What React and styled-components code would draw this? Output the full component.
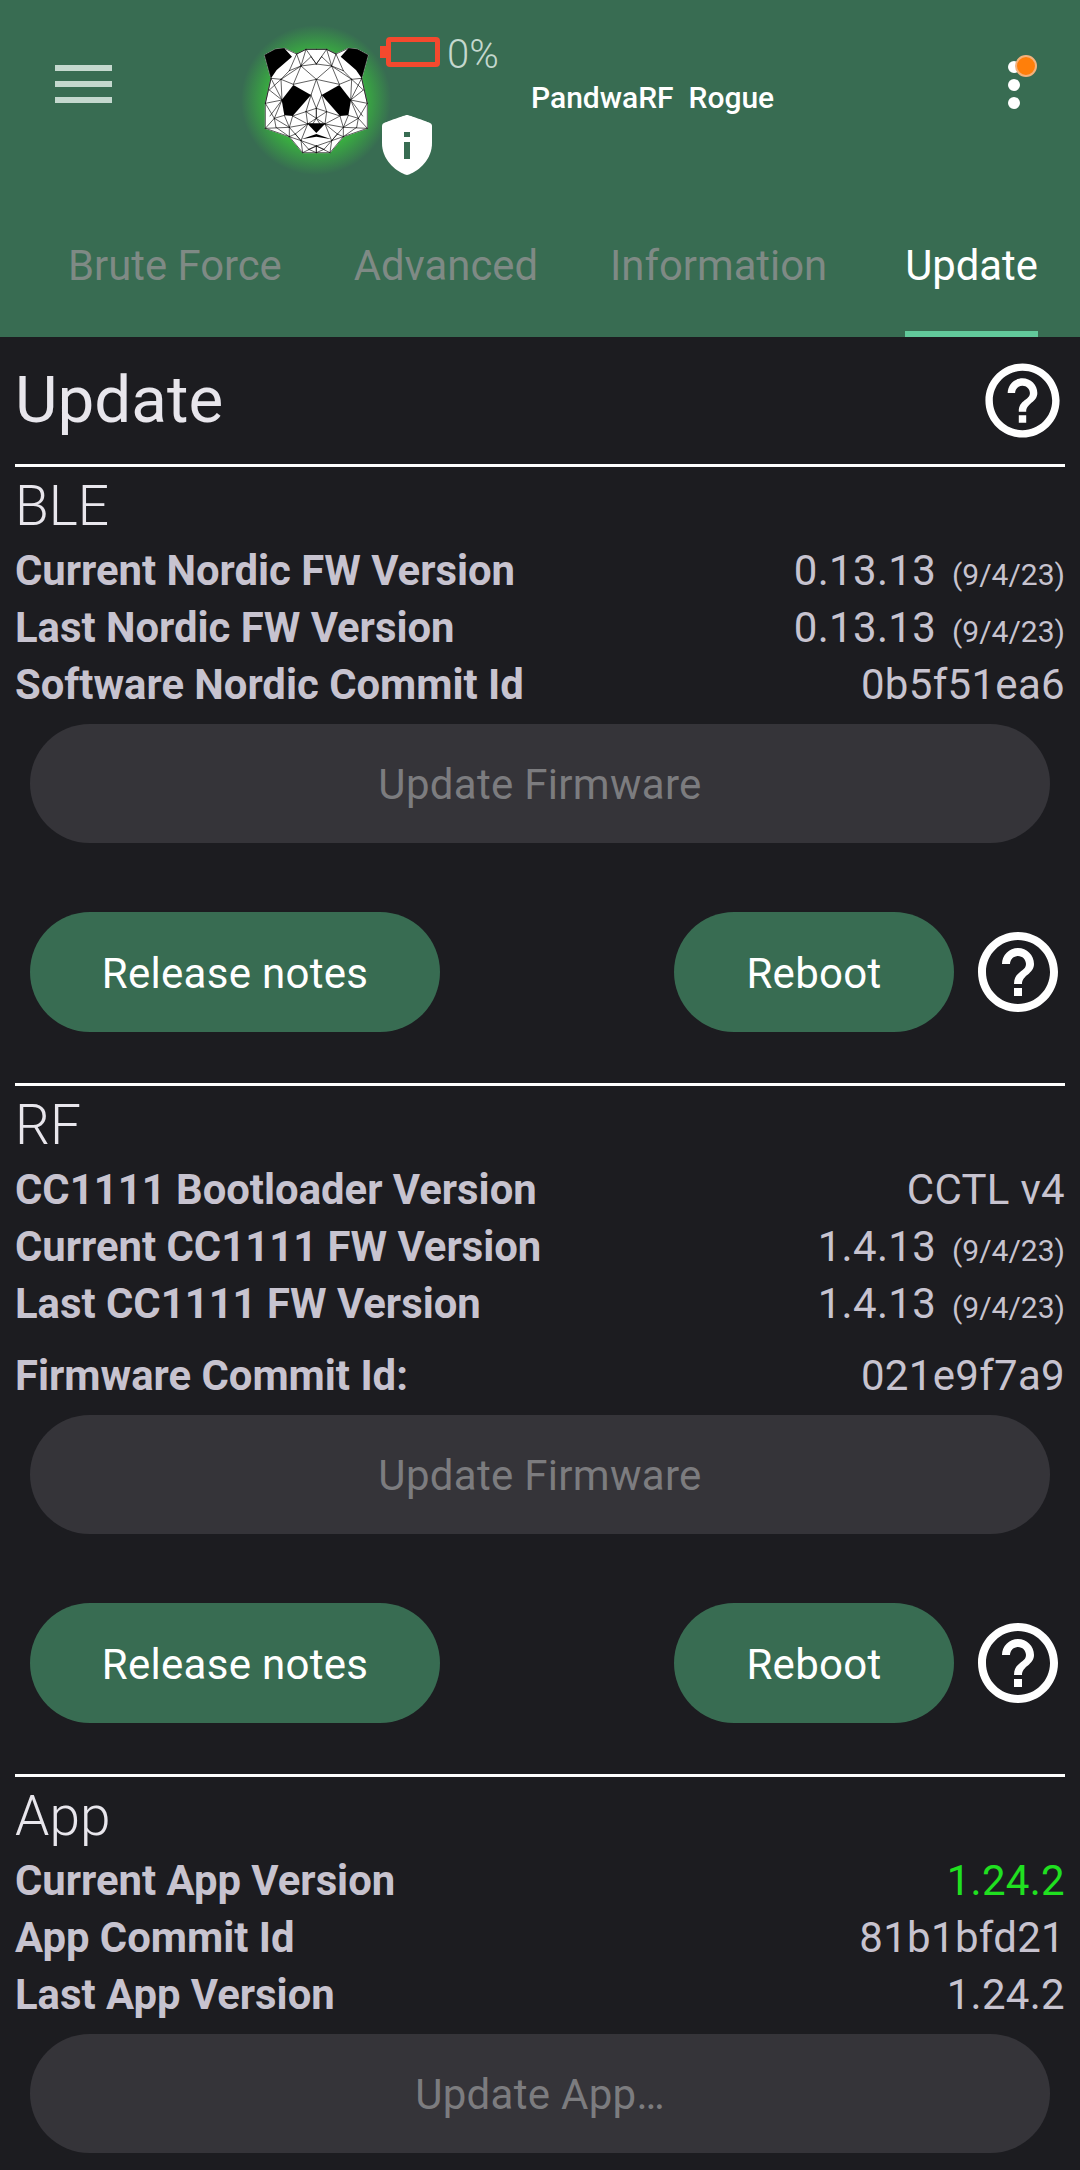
import React from "react";
import styled, { createGlobalStyle } from "styled-components";
import { MdHelpOutline } from "react-icons/md";

const Global = createGlobalStyle`
  html, body {
    margin: 0;
    padding: 0;
    background: #1c1c20;
  }
  * {
    box-sizing: border-box;
  }
`;

const Page = styled.div`
  width: 1080px;
  height: 2170px;
  overflow: hidden;
  background: #1c1c20;
  font-family: Roboto, "Liberation Sans", sans-serif;
`;

// * Header
const Header = styled.header`
  height: 337px;
  background: #386c52;
`;

const TopBar = styled.div`
  display: flex;
  align-items: flex-start;
  height: 175px;
`;

const MenuIcon = styled.div`
  display: flex;
  flex-direction: column;
  gap: 10px;
  width: 57px;
  margin: 65px 0 0 55px;
`;

const MenuBar = styled.span`
  display: block;
  height: 6px;
  background: #c4d8ce;
`;

const Logo = styled.div`
  display: flex;
  align-items: center;
  justify-content: center;
  width: 150px;
  height: 150px;
  margin: 25px 0 0 129px;
  border-radius: 50%;
  background: radial-gradient(closest-side, #3acb3a 0%, #3ac63a 50%, rgba(56, 108, 82, 0) 100%);
`;

const StatusColumn = styled.div`
  display: flex;
  flex-direction: column;
  align-items: flex-start;
  width: 151px;
  margin: 33px 0 0 -11px;
`;

const BatteryRow = styled.div`
  display: flex;
  align-items: center;
  gap: 7px;
  height: 38px;
  color: #c4d8ce;
  font-size: 40px;
  font-weight: 300;
`;

const Percent = styled.span`
  margin-top: 5px;
`;

const ShieldIcon = styled.svg`
  width: 50px;
  height: 60px;
  margin: 44px 0 0 2px;
`;

const DeviceName = styled.div`
  margin-top: 79px;
  color: #fff;
  font-size: 30px;
  font-weight: 500;
  line-height: 38px;
  white-space: pre;
`;

const MoreIcon = styled.div`
  position: relative;
  display: flex;
  flex-direction: column;
  gap: 6px;
  margin: 61px 60px 0 auto;
`;

const MoreDot = styled.span`
  display: block;
  width: 12px;
  height: 12px;
  border-radius: 50%;
  background: #fff;
`;

const Badge = styled.span`
  position: absolute;
  top: -6px;
  left: 7px;
  width: 22px;
  height: 22px;
  border: 2px solid #f4b27c;
  border-radius: 50%;
  background: #ff7f0a;
`;

const Tabs = styled.nav`
  display: flex;
  gap: 72px;
  height: 162px;
  padding-left: 68px;
`;

const Tab = styled.div`
  height: 162px;
  margin-left: ${p => (p.$active ? 6 : 0)}px;
  padding-top: 69px;
  border-bottom: 6px solid ${p => (p.$active ? "#62c99b" : "transparent")};
  color: ${p => (p.$active ? "#fff" : "#7f8a85")};
  font-size: 41.8px;
  line-height: 44px;
`;

// * Content
const Content = styled.main`
  padding: 0 15px;
`;

const TitleRow = styled.div`
  display: flex;
  align-items: center;
  justify-content: space-between;
  height: 127px;
`;

const Title = styled.h1`
  margin: 0 0 3px;
  color: #e8e6ec;
  font-size: 65.6px;
  font-weight: 400;
`;

const HelpIcon = styled(MdHelpOutline)`
  display: block;
  flex: none;
  margin: ${p => p.$margin};
  color: #fff;
`;

const Divider = styled.hr`
  height: 3px;
  margin: 0;
  border: 0;
  background: #fff;
`;

const SectionTitle = styled.h2`
  display: flex;
  align-items: center;
  height: 75px;
  margin: 0;
  padding-top: 2px;
  color: #e8e6ec;
  font-size: 55px;
  font-weight: 300;
`;

const Row = styled.div`
  display: flex;
  align-items: center;
  justify-content: space-between;
  height: 57px;
  margin-top: ${p => p.$gap || 0}px;
  color: #c7c3cf;
`;

const Label = styled.span`
  font-size: 41.8px;
  font-weight: 700;
`;

const Value = styled.span`
  color: ${p => (p.$ok ? "#20e020" : "#c7c3cf")};
  font-size: 42px;
  font-weight: 400;
  letter-spacing: 0.3px;
`;

const DateText = styled.small`
  margin-left: 16px;
  font-size: 30px;
  font-weight: 400;
  letter-spacing: 0;
`;

const WideButton = styled.div`
  display: flex;
  align-items: center;
  justify-content: center;
  height: 119px;
  margin: 11px 15px 0;
  padding-top: 2px;
  border-radius: 60px;
  background: #353439;
  color: #7c7c7f;
  font-size: 42px;
  letter-spacing: 0.3px;
`;

const ActionRow = styled.div`
  display: flex;
  align-items: center;
  height: 120px;
  margin: 69px 0 51px 15px;
`;

const PillButton = styled.div`
  display: flex;
  align-items: center;
  justify-content: center;
  width: ${p => p.$width}px;
  height: 120px;
  margin-right: ${p => p.$push || 0}px;
  padding-top: 2px;
  border-radius: 60px;
  background: #386c52;
  color: #fff;
  font-size: 42px;
  letter-spacing: 0.3px;
`;

// * Panda logo: left half of the mesh, mirrored around x=181
const meshLines = [
  [122, 42, 150, 28], [150, 28, 181, 28], [150, 28, 135, 78], [150, 28, 181, 72], [122, 42, 135, 78],
  [122, 42, 100, 92], [135, 78, 181, 72], [135, 78, 181, 118], [135, 78, 75, 118], [135, 78, 112, 133],
  [112, 133, 181, 118], [75, 118, 112, 133], [75, 118, 45, 115], [45, 115, 78, 180], [75, 118, 78, 180],
  [28, 190, 78, 180], [28, 190, 55, 235], [78, 180, 55, 235], [85, 226, 55, 235], [28, 265, 55, 235],
  [28, 265, 100, 262], [55, 235, 100, 262], [85, 226, 100, 262], [110, 228, 100, 262], [110, 228, 155, 252],
  [100, 262, 155, 252], [100, 262, 100, 290], [100, 290, 135, 302], [100, 262, 135, 302], [155, 252, 135, 302],
  [135, 302, 140, 338], [135, 302, 181, 318], [140, 338, 181, 318], [181, 318, 181, 338], [165, 165, 181, 118],
  [165, 165, 150, 215], [110, 228, 150, 215], [150, 215, 155, 252], [150, 215, 181, 205], [165, 165, 181, 205],
  [181, 205, 181, 235], [181, 235, 155, 252], [150, 215, 181, 235], [28, 190, 45, 115],
  [100, 92, 75, 118], [100, 92, 135, 78], [165, 50, 135, 78], [165, 50, 181, 72], [40, 150, 75, 118],
  [40, 150, 78, 180], [42, 228, 78, 180], [60, 262, 55, 235], [60, 262, 100, 290], [118, 282, 155, 252],
  [118, 282, 100, 290], [118, 282, 135, 302], [158, 328, 135, 302], [158, 328, 181, 318], [158, 328, 181, 338],
  [181, 235, 170, 252]
];

const outline =
  "45,115 26,45 58,28 85,25 122,42 150,28 212,28 240,42 277,25 304,28 336,45 317,115 334,190 334,265 262,290 222,338 140,338 100,290 28,265 28,190";

const leftEar = "45,115 26,45 58,28 85,25 108,50 62,90";
const rightEar = "317,115 336,45 304,28 277,25 254,50 300,90";
const leftEye = "112,135 165,165 110,228 85,226 77,180";
const rightEye = "250,135 197,165 252,228 277,226 285,180";

function Panda() {
  return (
    <svg width="120" height="120" viewBox="0 0 360 360">
      <polygon points={outline} fill="#fff" stroke="#fff" strokeWidth="3" />
      <g stroke="#111" strokeWidth="2" strokeLinecap="round">
        {meshLines.map(([x1, y1, x2, y2], i) => (
          <React.Fragment key={i}>
            <line x1={x1} y1={y1} x2={x2} y2={y2} />
            <line x1={362 - x1} y1={y1} x2={362 - x2} y2={y2} />
          </React.Fragment>
        ))}
      </g>
      <polygon points={outline} fill="none" stroke="#111" strokeWidth="2" />
      <g fill="#000">
        <polygon points={leftEar} />
        <polygon points={rightEar} />
        <polygon points={leftEye} />
        <polygon points={rightEye} />
        <polygon points="153,250 209,250 181,279" />
        <polygon points="136,298 181,282 226,298 181,290" />
      </g>
    </svg>
  );
}

function Battery() {
  return (
    <svg width="60" height="30" viewBox="0 0 60 30">
      <rect x="0" y="9" width="7" height="12" fill="#f4492e" />
      <rect x="8.5" y="2.5" width="49" height="25" rx="1.5" fill="none" stroke="#f4492e" strokeWidth="5" />
    </svg>
  );
}

function Section({ title, rows, wideLabel, actions }) {
  return (
    <section>
      <Divider />
      <SectionTitle>{title}</SectionTitle>
      {rows.map(row => (
        <Row key={row.label} $gap={row.gap}>
          <Label>{row.label}</Label>
          <Value $ok={row.ok}>
            {row.value}
            {row.date && <DateText>{row.date}</DateText>}
          </Value>
        </Row>
      ))}
      <WideButton>{wideLabel}</WideButton>
      {actions && (
        <ActionRow>
          <PillButton $width={410} $push={234}>Release notes</PillButton>
          <PillButton $width={280} $push={24}>Reboot</PillButton>
          <HelpIcon size={96} $margin="0 -8px" />
        </ActionRow>
      )}
    </section>
  );
}

const bleRows = [
  { label: "Current Nordic FW Version", value: "0.13.13", date: "(9/4/23)" },
  { label: "Last Nordic FW Version", value: "0.13.13", date: "(9/4/23)" },
  { label: "Software Nordic Commit Id", value: "0b5f51ea6" }
];

const rfRows = [
  { label: "CC1111 Bootloader Version", value: "CCTL v4" },
  { label: "Current CC1111 FW Version", value: "1.4.13", date: "(9/4/23)" },
  { label: "Last CC1111 FW Version", value: "1.4.13", date: "(9/4/23)" },
  { label: "Firmware Commit Id:", value: "021e9f7a9", gap: 15 }
];

const appRows = [
  { label: "Current App Version", value: "1.24.2", ok: true },
  { label: "App Commit Id", value: "81b1bfd21" },
  { label: "Last App Version", value: "1.24.2" }
];

export default function App() {
  return (
    <Page>
      <Global />
      <Header>
        <TopBar>
          <MenuIcon>
            <MenuBar />
            <MenuBar />
            <MenuBar />
          </MenuIcon>
          <Logo>
            <Panda />
          </Logo>
          <StatusColumn>
            <BatteryRow>
              <Battery />
              <Percent>0%</Percent>
            </BatteryRow>
            <ShieldIcon viewBox="0 0 50 60">
              <path
                d="M25 0 C27 0 46 7 48 8 C50 9 50 10 50 12 V28 C50 44 38 55 27 59.5 C25.5 60 24.5 60 23 59.5 C12 55 0 44 0 28 V12 C0 10 0 9 2 8 C4 7 23 0 25 0 Z"
                fill="#fff"
              />
              <rect x="22" y="17" width="6" height="5" fill="#386c52" />
              <rect x="22" y="27" width="6" height="17" fill="#386c52" />
            </ShieldIcon>
          </StatusColumn>
          <DeviceName>PandwaRF  Rogue</DeviceName>
          <MoreIcon>
            <MoreDot />
            <MoreDot />
            <MoreDot />
            <Badge />
          </MoreIcon>
        </TopBar>
        <Tabs>
          <Tab>Brute Force</Tab>
          <Tab>Advanced</Tab>
          <Tab>Information</Tab>
          <Tab $active>Update</Tab>
        </Tabs>
      </Header>
      <Content>
        <TitleRow>
          <Title>Update</Title>
          <HelpIcon size={89} $margin="0 -2px 0 0" />
        </TitleRow>
        <Section title="BLE" rows={bleRows} wideLabel="Update Firmware" actions />
        <Section title="RF" rows={rfRows} wideLabel="Update Firmware" actions />
        <Section title="App" rows={appRows} wideLabel="Update App…" />
      </Content>
    </Page>
  );
}
